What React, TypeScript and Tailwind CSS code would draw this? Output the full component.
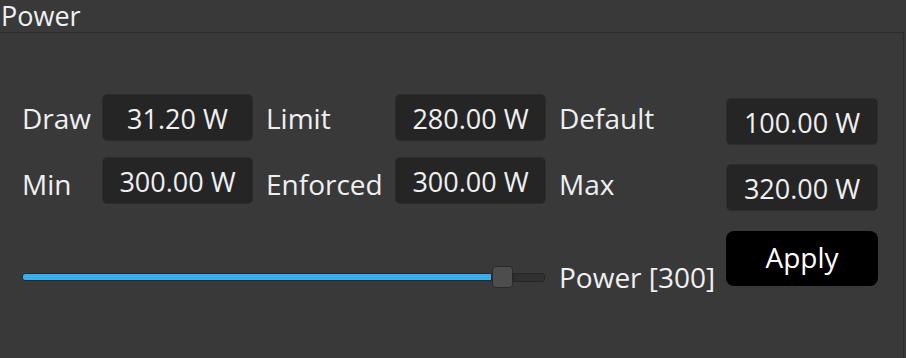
import React from "react";

const font = { fontFamily: '"Open Sans", "Noto Sans", sans-serif' };

function Box({ children, className = "" }: { children: React.ReactNode; className?: string }) {
  return (
    <div
      className={
        "flex h-[47px] items-center justify-center rounded-[5px] border border-[#2c2c2c] bg-[#252525] pt-[3px] text-[27px] text-[#eff0f1] " +
        className
      }
    >
      {children}
    </div>
  );
}

export default function App() {
  return (
    <div className="h-[358px] w-[906px] overflow-hidden bg-[#393939] text-[#eff0f1]" style={font}>
      <div className="flex h-[32px] items-center text-[27px] leading-none">
        <span className="-mt-[2px] pl-[1px]">Power</span>
      </div>
      <div className="h-[330px] w-[904px] border-t border-r border-[#2c2c2c] pt-[61px]">
        {/* row 1 */}
        <div className="flex h-[51px] items-start text-[28px]">
          <div className="flex h-[47px] w-[102px] items-center pl-[22px]">Draw</div>
          <Box className="w-[151px]">31.20 W</Box>
          <div className="flex h-[47px] w-[142px] items-center pl-[13px]">Limit</div>
          <Box className="w-[151px]">280.00 W</Box>
          <div className="flex h-[47px] w-[180px] items-center pl-[13px]">Default</div>
          <Box className="mt-[4px] w-[152px]">100.00 W</Box>
        </div>
        {/* row 2 */}
        <div className="mt-[12px] flex h-[54px] items-start text-[28px]">
          <div className="flex h-[54px] w-[102px] items-center pl-[22px]">Min</div>
          <Box className="w-[151px]">300.00 W</Box>
          <div className="flex h-[54px] w-[142px] items-center pl-[13px]">Enforced</div>
          <Box className="w-[151px]">300.00 W</Box>
          <div className="flex h-[54px] w-[180px] items-center pl-[13px]">Max</div>
          <Box className="mt-[7px] w-[152px]">320.00 W</Box>
        </div>
        {/* row 3 */}
        <div className="mt-[20px] flex h-[58px] items-end text-[28px]">
          <div className="ml-[22px] flex h-[24px] w-[524px] items-center">
            <div className="h-[8px] w-[470px] rounded-l-[3px] border border-[#1f2a33] bg-[#3daee9]" />
            <div className="h-[22px] w-[21px] shrink-0 rounded-[4px] border border-[#2a2a2a] bg-[#4d4d4d]" />
            <div className="h-[9px] w-[32px] rounded-r-[3px] border border-[#262626] bg-[#303030]" />
          </div>
          <div className="flex h-[24px] w-[180px] items-center pl-[13px]">Power [300]</div>
          <div className="mb-[3px] flex h-[55px] w-[152px] items-center justify-center self-start rounded-[8px] bg-black pb-[3px] text-[28px] text-white">
            Apply
          </div>
        </div>
      </div>
    </div>
  );
}
